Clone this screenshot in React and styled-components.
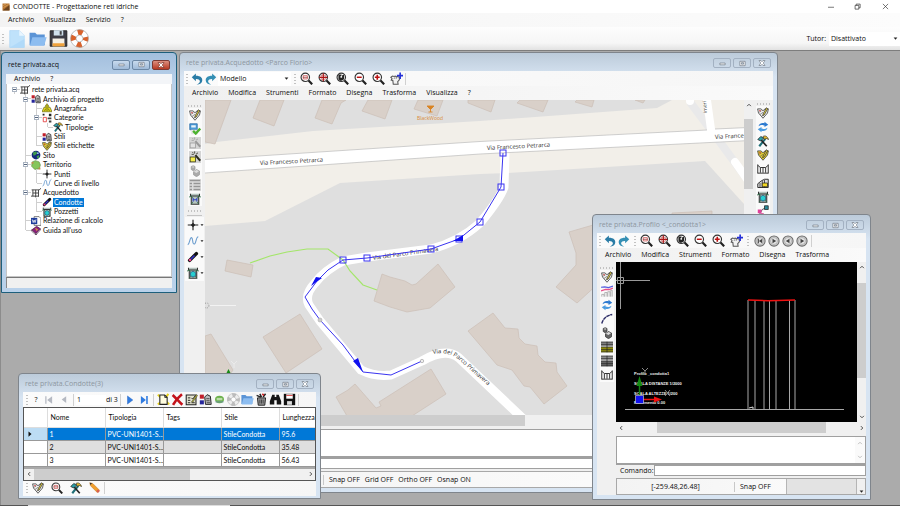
import React from 'react';
import styled, { createGlobalStyle, css } from 'styled-components';

const GlobalStyle = createGlobalStyle`
    * {
        box-sizing: border-box;
    }

    body {
        margin: 0;
        overflow: hidden;
        font-family: "Open Sans", "Noto Sans", sans-serif;
        font-size: 7px;
        line-height: 10px;
        color: #0c0c0c;
    }

    button, input, select, textarea {
        font: inherit;
        color: inherit;
        margin: 0;
        padding: 0;
        border: 0;
        background: none;
        outline: none;
    }
`;

/* ---------- icons ---------- */

const Svg = styled.svg`
    display: block;
    flex: none;
    width: ${(p) => p.$size}px;
    height: ${(p) => p.$size}px;
`;

const lens = (
    <>
        <circle cx="6.5" cy="6.5" r="5.2" fill="#fff" stroke="#333" strokeWidth="1.4" />
        <path d="M10.5 10.5L15 15.2" stroke="#222" strokeWidth="2.6" />
    </>
);

const heart = (fill) => (
    <>
        <path d="M.8 2.500h4.500L8 5l2.700-2.500h4.500L14 8l-6 7-6-7z" fill={fill} stroke="#444" strokeWidth="1.100" />
        <path d="M4 10l4-3M6 12.500l4-3M3 7l3-2" stroke="#666" strokeWidth=".9" />
        <path d="M8 9.500L12.500 1l1.800 1.200-4.300 7.800-2.200 1.500z" fill="#e8d548" stroke="#222" strokeWidth=".9" />
        <circle cx="4" cy="5" r="1.100" fill="#c33" />
    </>
);

const buoy = (ring, band) => (
    <>
        <circle cx="8" cy="8" r="5.200" fill="none" stroke={band} strokeWidth="4.600" />
        <circle cx="8" cy="8" r="5.200" fill="none" stroke={ring} strokeWidth="4.600" strokeDasharray="4.080 4.080" strokeDashoffset="2.040" />
        <circle cx="8" cy="8" r="7.500" fill="none" stroke="#999" strokeWidth=".5" />
        <circle cx="8" cy="8" r="2.900" fill="#fff" stroke="#999" strokeWidth=".5" />
    </>
);

const wand = (box, stick) => (
    <>
        <rect x="0" y="0" width="16" height="16" fill="#d4d4d4" />
        <rect x="1.500" y="8" width="7" height="6.500" fill={box} stroke={stick} />
        <path d="M8.500 5.500l6.500 7.500" stroke={stick} strokeWidth="2.600" />
        <path d="M7.500 .5v3M3.500 4.500h3M9.500 4L12 2.500M4.500 1.500L6 3" stroke={stick} strokeWidth="1" />
    </>
);

const manhole = (fill) => (
    <>
        <path d="M2 1v3h12V1M3 4v11h10V4z" fill="#b4c4bf" stroke="#333" strokeWidth="1.400" />
        <path d="M0 5.500l3-1.500M16 5.500l-3-1.500M3 15l2-3M13 15l-2-3M3 4l2 3M13 4l-2 3" stroke="#2d6d48" strokeWidth="1.100" />
        {fill && <path d="M8 5.500l3.500 2v4L8 13.500l-3.500-2v-4z" fill={fill} stroke="#136" strokeWidth=".8" />}
    </>
);

const sheet = (top, bottom) => (
    <>
        <path d="M0 1h16v6H0z" fill={top} />
        <path d="M0 8h16v7H0z" fill={bottom} />
        <path d="M0 1.500h16M0 4.500h16M0 8h16M0 11.500h16M0 14.500h16M8 1v14" stroke="#222" strokeWidth=".9" />
    </>
);

const cubes = (fill, ink, light) => (
    <>
        <path d="M3 2l2.500-1L8 2v4L5.500 7.500 3 6z" fill={fill} stroke={ink} />
        <path d="M6 9l4-3 4 2v5l-4 2.500L6 13z" fill={fill} stroke={ink} />
        <path d="M6.500 9l3.500 1.500L13.500 8 10 6.500zM3.500 2.500l2 1 2-1-2-1z" fill={light} />
    </>
);

const round = (mark) => (
    <>
        <circle cx="8" cy="8" r="6.800" fill="#d4d4d4" stroke="#6a6a6a" strokeWidth="1.400" />
        <circle cx="8" cy="8" r="4.600" fill="#e6e6e6" stroke="#999" strokeWidth=".8" />
        <path d={mark} fill="#444" />
    </>
);

const glyphs = {
    app: (
        <>
            <path d="M1 1h14v14H1z" fill="#b5722e" />
            <path d="M1 15L15 4v11z" fill="#6b4420" />
            <path d="M2 5l6-3M3 9l10-6" stroke="#e3b777" strokeWidth="1.200" />
        </>
    ),
    page: (
        <>
            <path d="M1.500 .5h8.500l4.500 4.500v10.500h-13z" fill="#bfe2fb" stroke="#a5d3f5" strokeWidth=".5" />
            <path d="M10 .5V5h4.500z" fill="#e9f6ff" />
            <path d="M1.500 15.500h13V8z" fill="#a9d6f8" opacity=".6" />
        </>
    ),
    folder: (
        <>
            <path d="M.5 2.500h5L7 4h7v9.500H.5z" fill="#5b94d6" />
            <path d="M3 6.500h12.700L13.500 14H.8z" fill="#8dbdf0" />
        </>
    ),
    disk: (
        <>
            <path d="M1 1.500h14v13H1z" fill="#3c3c44" stroke="#222" strokeWidth=".8" />
            <path d="M4 1h8v4.500H4z" fill="#cfe0ec" />
            <path d="M9 1.800h1.700v3H9z" fill="#444" />
            <path d="M3 8h10v6.500H3z" fill="#f6f1e6" />
            <path d="M3 12h10v2.600H3z" fill="#efa23c" />
        </>
    ),
    save: (
        <>
            <path d="M1 1h14v14H1z" fill="#111" />
            <path d="M4 1.500h8V7H4z" fill="#fff" />
            <path d="M5 10h6v4.500H5z" fill="#ddd" />
            <path d="M4 3h8" stroke="#c22" />
        </>
    ),
    buoy: buoy('#d9622b', '#fff'),
    buoyGrey: buoy('#bdbdbd', '#eee'),
    undo: <path d="M1 5.500L6.500 .5v3c6.500 0 9 3 8.500 6.700-.3 2.800-3 4.800-7.500 5.300 3.500-1.500 4.500-3 4.300-4.700-.3-2-2.300-2.900-5.300-2.800v3z" fill="#2a7ca6" />,
    redo: <path d="M15 5.500L9.500 .5v3C3 3.500 .5 6.500 1 10.200c.3 2.800 3 4.800 7.500 5.300-3.500-1.500-4.500-3-4.300-4.700.3-2 2.300-2.900 5.300-2.800v3z" fill="#348fb4" />,
    zoomWindow: <>{lens}<path d="M4 4.500h5v4H4z" fill="none" stroke="#c55" /><path d="M3.500 6.500h6" stroke="#944" /></>,
    zoomAll: <>{lens}<path d="M6.500 1.500v10M1.500 6.500h10" stroke="#a11" strokeWidth="1.500" /><path d="M4 4h5v5H4z" fill="none" stroke="#b33" strokeWidth=".7" /></>,
    zoomPrev: <>{lens}<path d="M3 3h4l-1 2 4-2v6L6 11 3 9z" fill="#222" /><path d="M5.500 5h2v2h-2z" fill="#fff" /></>,
    zoomOut: <>{lens}<path d="M3.500 6.500h6" stroke="#b11" strokeWidth="1.800" /></>,
    zoomIn: <>{lens}<path d="M3.500 6.500h6M6.500 3.500v6" stroke="#b11" strokeWidth="2" /></>,
    pan: (
        <>
            <path d="M4 15h6l-.5-3 2-2.500V6.500l-2-1-1.500.5-1.500-1-1.500.5L3 5 1 6.500 2.500 8l-1 2 2 .5z" fill="#f2f2f2" stroke="#555" strokeWidth="1.300" />
            <path d="M5 8.500l1-2M7.500 8.500l.5-2" stroke="#666" strokeWidth=".9" />
            <path d="M12.500 .5v8M8.500 4.500h7.500" stroke="#2430d8" strokeWidth="2" />
        </>
    ),
    heart: heart('#f1f1f1'),
    heartYellow: heart('#e5cf2e'),
    check: (
        <>
            <path d="M1 1h10v8H1z" fill="#4b9bd8" stroke="#2b6ba5" />
            <path d="M3 3h6v3H3z" fill="#e8f3fb" />
            <path d="M3 9h9v6H3z" fill="#e5e5e5" />
            <path d="M5.500 10.500l3.500 3.500 6-6.500" fill="none" stroke="#4cb22f" strokeWidth="3.200" />
        </>
    ),
    wandGrey: wand('#e2e2e2', '#999'),
    wand: wand('#f4ec4a', '#2a2a1a'),
    cubes: cubes('#666', '#333', '#ddd'),
    cubesGrey: cubes('#aaa', '#999', '#ddd'),
    listGrey: (
        <>
            <path d="M0 0h16v16H0z" fill="#dcdcdc" />
            <path d="M1 1h14v2H1zM1 5h3v2H1zM1 9h3v2H1zM1 13h3v2H1zM6 5h9v2H6zM6 9h9v2H6zM6 13h9v2H6z" fill="#969696" />
        </>
    ),
    well: <>{manhole()}<path d="M5.500 6.500v5M10.500 6.500v5M5.500 9h5" stroke="#2b3bc0" strokeWidth="1.300" /></>,
    manhole: manhole('#28cfcf'),
    point: <><path d="M8 1v14M1 8h14" stroke="#222" strokeWidth="1.500" /><path d="M8 5l3 3-3 3-3-3z" fill="#222" /></>,
    curve: <path d="M1 13C4 12 3.500 3 6 3.500s.5 8.500 3.500 8.500 1.500-8 5.500-10" fill="none" stroke="#6f9fcf" strokeWidth="1.500" />,
    pipe: (
        <>
            <path d="M3.500 12.500L12.500 3.500" stroke="#111" strokeWidth="4.600" strokeLinecap="round" />
            <path d="M5 11l5-5" stroke="#3333cc" strokeWidth="2.200" />
            <circle cx="4" cy="12" r="1.700" fill="#e48" />
        </>
    ),
    sync: (
        <>
            <path d="M2 7c1-4 5-5 8-4V1l5 4-5 3V6C7 5 5 5 2 7z" fill="#2c7ad0" />
            <path d="M14 9c-1 4-5 5-8 4v2l-5-4 5-3v2c3 1 5 1 8-1z" fill="#4a9be0" />
        </>
    ),
    tools: (
        <>
            <path d="M3 15L11 5" stroke="#1f6f78" strokeWidth="2.800" />
            <path d="M13 15L5 6" stroke="#222" strokeWidth="2.200" />
            <path d="M1 6l4-4 4 2-4 4z" fill="#2aa0a8" stroke="#222" />
            <path d="M8 2c3-2 6 0 7.500 4L12 4.500 10 6z" fill="#e0b52c" stroke="#222" strokeWidth=".8" />
        </>
    ),
    section: <path d="M1 2v12M15 2v12M1 3l3.500 3h7L15 3M1 13.500h14M4.500 6v7M8 6v7M11.500 6v7" fill="none" stroke="#333" strokeWidth="1.300" />,
    sectionYellow: (
        <>
            <path d="M1 14V9l5-4 4-2h5v11z" fill="#ddd" stroke="#222" strokeWidth="1.200" />
            <path d="M4 8v6M7 5v9M10 4v10" stroke="#222" />
            <path d="M7 8h7v5H7z" fill="#f2d824" stroke="#222" />
        </>
    ),
    nodes: (
        <>
            <path d="M3 13l4-7 6-3" stroke="#222" fill="none" />
            <path d="M1 6h5v5H1z" fill="#e0409a" />
            <path d="M10 1h5v5h-5z" fill="#2a8a9a" stroke="#222" />
            <path d="M5 11h4v4H5z" fill="#d03a8c" />
        </>
    ),
    chart: (
        <>
            <path d="M1 15.500v-3h3v3M5 15.500V10h3v5.500M9 15.500V9h3v6.500M13 15.500V7h2v8.500" fill="#f4f4f4" stroke="#999" strokeWidth=".9" />
            <path d="M0 3l5-.5 5 1 6-2" fill="none" stroke="#5560e0" strokeWidth="1.500" />
            <path d="M0 8l6-2 5 0 5-2" fill="none" stroke="#e8508a" strokeWidth="1.700" />
        </>
    ),
    arc: <path d="M1 14C3 7 8 3 15 2" fill="none" stroke="#2c2c66" strokeWidth="1.900" strokeDasharray="5 .6" />,
    sheetYellow: sheet('#888', '#8f8b10'),
    sheetGrey: sheet('#999', '#666'),
    roundFirst: round('M5 5h1.500v6H5zM11 5v6L6.500 8z'),
    roundNext: round('M6 5l5 3-5 3z'),
    roundPrev: round('M10 5v6L5 8z'),
    roundLast: round('M6 5l5 3-5 3z'),
    first: <path d="M2 2h2v12H2zM13 2v12L5 8z" fill="#b5b9c2" />,
    prev: <path d="M11 2v12L3 8z" fill="#b5b9c2" />,
    next: <path d="M4 1.500v13L12.500 8z" fill="#2f7be0" stroke="#1b5fc0" strokeWidth=".7" />,
    last: <path d="M3 1.500v13L11 8zM11.500 1.500h2.500v13h-2.500z" fill="#2f7be0" />,
    newRow: (
        <>
            <path d="M1 2l4 4M14 1l-3 4M1 14l4-3M15 14l-3-3" stroke="#e8d31e" strokeWidth="2.500" />
            <path d="M3.500 2.500h6l3 3v8.500h-9z" fill="#fffde0" stroke="#222" strokeWidth="1.300" />
            <path d="M9.500 2.500v3h3" fill="none" stroke="#222" />
        </>
    ),
    remove: <path d="M2 2.500C6 6 10 11 14 14.500M13.500 1.500C9 5 5 10 2.500 14.500" fill="none" stroke="#c3121a" strokeWidth="3.200" />,
    form: (
        <>
            <path d="M1.500 2.500h12v12h-12z" fill="#e6e6d2" stroke="#222" strokeWidth="1.300" />
            <path d="M3.500 6h3M3.500 9h3M3.500 12h3M8 6l1.500 1.500 3-4M8 12h4" fill="none" stroke="#222" strokeWidth="1.200" />
            <path d="M8 11l6-9 1.500 1-6 8.500z" fill="#b8b431" stroke="#333" strokeWidth=".6" />
        </>
    ),
    style: (
        <>
            <path d="M1 2h5v5H1z" fill="#c11f2a" />
            <path d="M1 9h5v5H1z" fill="#26269b" />
            <path d="M7 5l3-3 4 2 1 10H8z" fill="#bbb" stroke="#222" strokeWidth="1.200" />
            <path d="M9 7h4M9 9.500h4M9.500 12h4" stroke="#333" />
        </>
    ),
    world: (
        <>
            <path d="M2.500 8a5.500 4.500 0 0111 0 5.500 4.500 0 01-11 0z" fill="#6bb04b" />
            <path d="M4.500 6h7v3h-7z" fill="#bcdca9" />
            <path d="M3 11h10" stroke="#6d8bb0" />
        </>
    ),
    bin: (
        <>
            <path d="M3 6h10l-1 9H4z" fill="#999" stroke="#222" strokeWidth="1.200" />
            <path d="M2 3l5 2M6 1l2 4M13 1l-3 4" stroke="#222" strokeWidth="1.800" />
            <path d="M9 1l2 2" stroke="#c22" strokeWidth="2" />
            <path d="M6 8v5M8 8v5M10 8v5" stroke="#333" />
        </>
    ),
    binoculars: <path d="M4 2h3v3h2V2h3l3 8v4H9.500V9h-3v5H1v-4z" fill="#151515" />,
    pencil: (
        <>
            <path d="M1 1l4 1 9 9-3 3-9-9z" fill="#f2a02e" stroke="#b06a14" strokeWidth=".6" />
            <path d="M1 1l3 .8L2 4z" fill="#333" />
            <path d="M12 9.500l2.500 2.500-2.500 2.500-2.500-2.500z" fill="#d8604e" />
        </>
    ),
    network: <path d="M1 3h12l3-2.500M3 3v10M0 13h12M12 3v11M3 8h9M7.500 3v12" fill="none" stroke="#333" strokeWidth="1.400" />,
    trident: (
        <>
            <path d="M8 1l3 4-1 2h3l3 7H0l3-7h3L5 5z" fill="#e2d91c" stroke="#5d5a10" strokeWidth="1" />
            <path d="M8 3v10M4 13l2-4M12 13l-2-4" stroke="#45430e" />
        </>
    ),
    categories: (
        <>
            <path d="M1 1h3v3H1zM11 1h4v4h-4z" fill="#222" />
            <path d="M9 7h6v3H9zM11 12h4v3h-4z" fill="#444" />
            <path d="M2 7h5v7H2z" fill="#fff" stroke="#e03434" strokeWidth="1.300" />
        </>
    ),
    globe: (
        <>
            <circle cx="8" cy="8" r="7" fill="#14287c" />
            <path d="M3 4l5-2 2 3-3 3-3 1zM9 10l4-2v4l-3 2z" fill="#3d9a4c" />
            <circle cx="11" cy="5" r="1.400" fill="#9cc6ef" />
        </>
    ),
    land: (
        <>
            <path d="M2 3l5-2 6 2 2 5-2 6-7 1-5-5z" fill="#86c65c" stroke="#5d8a3f" />
            <path d="M1 3h3v3H1zM12 12h3v3h-3z" fill="#c08a4c" />
        </>
    ),
    word: (
        <>
            <path d="M5 1h8l3 3v11H5z" fill="#fff" stroke="#333" />
            <path d="M0 3h10v10H0z" fill="#1f3d9c" />
            <path d="M2 5.500l1.500 5L5 6.500l1.500 4 1.500-5" fill="none" stroke="#fff" strokeWidth="1.200" />
        </>
    ),
    book: (
        <>
            <path d="M1 8l8-6 6 4-7 8z" fill="#8d1f7c" stroke="#3b0d35" />
            <path d="M1 8l7 6v2L1 10zM8 14l7-8v2l-7 8z" fill="#eee" stroke="#3b0d35" strokeWidth=".8" />
            <path d="M7 6l3 1-1 2" fill="none" stroke="#f4d21c" strokeWidth="1.500" />
        </>
    ),
    minimize: <path d="M2 7h12v4H2z" fill="#fff" stroke="currentColor" strokeWidth="1.500" />,
    maximize: <path d="M2 3h12v10H2zM5.500 6h5v3.500h-5z" fill="#fff" fillRule="evenodd" stroke="currentColor" strokeWidth="1.500" />,
    close: <path d="M2 3h4l2 2.500L10 3h4l-3.500 5 3.500 5h-4l-2-2.500L6 13H2l3.500-5z" fill="#fff" stroke="currentColor" strokeWidth="1.200" />,
    sysMin: <path d="M2 8.500h12" stroke="#333" strokeWidth="1.300" />,
    sysMax: <path d="M2.500 5.500h8.500V14H2.500zM5 5.500V2.500h9V11h-3" fill="none" stroke="#333" strokeWidth="1.600" />,
    sysClose: <path d="M2 2l12 12M14 2L2 14" stroke="#333" strokeWidth="1.500" />,
    up: <path d="M3 11l5-5 5 5" fill="none" stroke="currentColor" strokeWidth="2.500" />,
    down: <path d="M3 5l5 5 5-5" fill="none" stroke="currentColor" strokeWidth="2.500" />,
    left: <path d="M11 3L6 8l5 5" fill="none" stroke="currentColor" strokeWidth="2.500" />,
    right: <path d="M5 3l5 5-5 5" fill="none" stroke="currentColor" strokeWidth="2.500" />,
    caret: <path d="M2 5h12l-6 7z" fill="#222" />,
    current: <path d="M4 1v14l8-7z" fill="#111" />
};

const Icon = ({ name, size = 12 }) => (
    <Svg viewBox="0 0 16 16" $size={size} aria-hidden="true">{glyphs[name]}</Svg>
);

/* ---------- shared parts ---------- */

const IconButton = styled.button`
    display: flex;
    align-items: center;
    justify-content: center;
    flex: none;
    width: ${(p) => p.$w || 14}px;
    height: ${(p) => p.$h || 14}px;
`;

const Grip = styled.span`
    flex: none;
    width: 2px;
    height: 10px;
    margin: 0 ${(p) => p.$gap || 2}px;
    background: repeating-linear-gradient(#c2c2c2 0 1px, transparent 1px 3px);
`;

const GripRow = styled.span`
    flex: none;
    width: 13px;
    height: 2px;
    margin: ${(p) => p.$top || 0}px 0 1px;
    background: repeating-linear-gradient(90deg, #c2c2c2 0 1px, transparent 1px 3px);
`;

const Divider = styled.span`
    flex: none;
    width: 1px;
    height: 12px;
    margin: 0 2px;
    background: #d0d0d0;
`;

const MenuBar = styled.nav`
    display: flex;
    align-items: center;
    flex: none;
    gap: 10px;
    height: ${(p) => p.$h || 14}px;
    padding-left: 8px;
    background: ${(p) => p.$bg || 'linear-gradient(90deg, #f0f0f0, #fafafa)'};
`;

const Menu = ({ items, ...rest }) => (
    <MenuBar {...rest}>
        {items.map((item) => <button type="button" key={item}>{item}</button>)}
    </MenuBar>
);

const SelectBox = styled.span`
    display: flex;
    align-items: center;
    flex: none;
    width: ${(p) => p.$w}px;
    height: 14px;
    background: #fff;

    select {
        flex: 1;
        min-width: 0;
        appearance: none;
        padding-left: 2px;
    }

    svg {
        margin-right: 2px;
        pointer-events: none;
    }
`;

const Select = ({ id, label, value, width }) => (
    <SelectBox $w={width}>
        <select id={id} aria-label={label} defaultValue={value}>
            <option>{value}</option>
        </select>
        <Icon name="caret" size={5} />
    </SelectBox>
);

const Frame = styled.section`
    position: absolute;
    left: ${(p) => p.$x}px;
    top: ${(p) => p.$y}px;
    width: ${(p) => p.$w}px;
    height: ${(p) => p.$h}px;
    display: flex;
    flex-direction: column;
    padding: 0 4px 4px;
    border: 1px solid ${(p) => (p.$active ? '#1d5f7c' : '#7f858c')};
    border-radius: 4px 4px 0 0;
    background: ${(p) => (p.$active
        ? 'linear-gradient(#a3bfdd, #b9d1ea 30px)'
        : 'linear-gradient(#bccbda, #d7e4f2 24px)')};
`;

const TitleBar = styled.header`
    display: flex;
    align-items: center;
    flex: none;
    height: ${(p) => p.$h}px;
    padding: 2px 0 0 2px;
    color: ${(p) => (p.$active ? '#111' : '#8d969f')};

    h2 {
        flex: 1;
        margin: 0;
        font: inherit;
    }
`;

const WinButton = styled.button`
    display: flex;
    align-items: center;
    justify-content: center;
    width: 18px;
    height: 10px;
    margin-right: 2px;
    border: 1px solid ${(p) => (p.$active ? '#6c88a6' : '#a3b1c2')};
    border-radius: 2px;
    color: #66707c;
    background: ${(p) => (p.$active ? 'linear-gradient(#c9dbee, #9fbad8)' : 'transparent')};

    ${(p) => p.$danger && css`
        border-color: #7c3a34;
        background: linear-gradient(#dc8f80, #b93a24);
        color: #6c241a;
    `}
`;

const Body = styled.div`
    display: flex;
    flex: 1;
    flex-direction: column;
    min-height: 0;
    background: #f0f0f0;
`;

const Window = ({ title, x, y, w, h, head = 18, active, children }) => (
    <Frame $x={x} $y={y} $w={w} $h={h} $active={active} aria-label={title}>
        <TitleBar $h={head} $active={active}>
            <h2>{title}</h2>
            <WinButton type="button" $active={active} aria-label="Riduci"><Icon name="minimize" size={7} /></WinButton>
            <WinButton type="button" $active={active} aria-label="Ingrandisci"><Icon name="maximize" size={7} /></WinButton>
            <WinButton type="button" $active={active} $danger={active} aria-label="Chiudi"><Icon name="close" size={8} /></WinButton>
        </TitleBar>
        <Body>{children}</Body>
    </Frame>
);

const ToolBar = styled.div`
    display: flex;
    align-items: center;
    flex: none;
    height: 15px;
    background: linear-gradient(90deg, #fbfbfb, #f6f6f6);
`;

const ToolGroup = styled.div`
    display: flex;
    align-items: center;
    gap: ${(p) => p.$gap || 0}px;
`;

const Rail = styled.div`
    display: flex;
    flex-direction: column;
    align-items: center;
    flex: none;
    width: ${(p) => p.$w}px;
    padding-top: ${(p) => p.$top || 5}px;
`;

const RailButton = styled(IconButton)`
    background: #fafafa;
`;

const RailMenu = styled.button`
    display: flex;
    align-items: center;
    gap: 1px;
    height: 16px;
    padding-left: 2px;
    background: #fafafa;
`;

const RailRule = styled.span`
    width: 15px;
    height: 1px;
    margin: 2px 0 1px;
    background: #c4c4c4;
`;

const Work = styled.div`
    display: flex;
    flex: 1;
    min-height: 0;
`;

const Main = styled.div`
    display: flex;
    flex: 1;
    flex-direction: column;
    min-width: 0;
`;

const View = styled.div`
    display: flex;
    flex: 1;
    min-height: 0;
`;

const Drawing = styled.svg`
    display: block;
    flex: 1;
    min-width: 0;
    height: 100%;
    background: ${(p) => p.$bg};
`;

const Scroll = styled.div`
    display: flex;
    flex: none;
    align-items: center;
    flex-direction: ${(p) => (p.$vertical ? 'column' : 'row')};
    width: ${(p) => (p.$vertical ? '9px' : 'auto')};
    height: ${(p) => (p.$vertical ? 'auto' : '11px')};
    background: #f0f0f0;
    color: #444;
`;

const Gap = styled.span`
    flex: ${(p) => p.$grow} 1 0;
`;

const Thumb = styled.span`
    flex: ${(p) => p.$grow} 1 0;
    align-self: stretch;
    background: #cdcdcd;
`;

const ScrollBar = ({ vertical, before, size, after }) => (
    <Scroll $vertical={vertical}>
        <IconButton type="button" $w={9} $h={10} aria-label="Indietro"><Icon name={vertical ? 'up' : 'left'} size={6} /></IconButton>
        <Gap $grow={before} />
        <Thumb $grow={size} />
        <Gap $grow={after} />
        <IconButton type="button" $w={9} $h={10} aria-label="Avanti"><Icon name={vertical ? 'down' : 'right'} size={6} /></IconButton>
    </Scroll>
);

const Output = styled.div`
    display: flex;
    flex: none;
    height: 29px;
    margin-top: 3px;
    border: 1px solid #a0a0a0;
    border-bottom-width: 2px;
    background: #fff;
    color: #bbb;

    textarea {
        flex: 1;
        resize: none;
    }
`;

const OutputArrows = styled.div`
    display: flex;
    flex-direction: column;
    justify-content: space-between;
    padding: 3px 2px;
    background: #fafafa;
`;

const Command = styled.div`
    display: flex;
    align-items: center;
    flex: none;
    height: 11px;

    label {
        width: 38px;
        padding-left: 4px;
    }

    input {
        flex: 1;
        min-width: 0;
        height: 11px;
        border: 1px solid #a0a0a0;
        background: #fff;
    }
`;

const StatusBar = styled.footer`
    display: flex;
    align-items: center;
    flex: none;
    gap: 5px;
    height: 17px;
    margin-top: 2px;
    border: 1px solid #a8a8a8;
    background: linear-gradient(90deg, #f3f3f3, #fdfdfd);
`;

const Coords = styled.span`
    width: 118px;
    border-right: 1px solid #c8c8c8;
    text-align: center;
    height: 10px;
`;

const StatusFill = styled.span`
    display: flex;
    flex: 1;
    align-self: stretch;
    align-items: flex-end;
    justify-content: flex-end;
    margin-left: 10px;
    border-left: 1px solid #b5b5b5;
    background: #e3e3e3;
`;

const SizeGrip = styled.span`
    width: 9px;
    height: 100%;
    display: flex;
    align-items: flex-end;
    justify-content: center;
    border-left: 1px solid #b5b5b5;
    background: #f0f0f0;
`;

const navTools = [
    ['zoomWindow', 'Zoom finestra'],
    ['zoomAll', 'Zoom estensioni'],
    ['zoomPrev', 'Zoom precedente'],
    ['zoomOut', 'Riduci zoom'],
    ['zoomIn', 'Aumenta zoom'],
    ['pan', 'Sposta vista']
];

const NavTools = () => (
    <ToolGroup $gap={4}>
        {navTools.map(([name, label]) => (
            <IconButton type="button" key={name} aria-label={label}><Icon name={name} size={13} /></IconButton>
        ))}
    </ToolGroup>
);

const UndoTools = () => (
    <ToolGroup>
        <IconButton type="button" aria-label="Annulla"><Icon name="undo" size={12} /></IconButton>
        <IconButton type="button" aria-label="Ripeti"><Icon name="redo" size={12} /></IconButton>
    </ToolGroup>
);

const RailTools = ({ names }) => names.map((name) => (
    <RailButton type="button" key={name} aria-label={name}><Icon name={name} /></RailButton>
));

/* ---------- project tree ---------- */

const Tree = styled.ul`
    display: grid;
    grid-auto-rows: minmax(0, 1fr);
    flex: none;
    height: 150px;
    margin: 1px 0 0;
    padding: 0 0 0 2px;
    list-style: none;
    font-family: Lato, "Liberation Sans", sans-serif;
`;

const TreePane = styled.div`
    flex: 1;
    border: 1px solid #c5c5c5;
    border-top: 0;
    background: #fff;
`;

const Node = styled.li`
    display: flex;
    align-items: stretch;

    svg, button {
        align-self: center;
    }
`;

const Guide = styled.span`
    position: relative;
    flex: none;
    width: 11px;
    display: flex;
    align-items: center;
    justify-content: center;

    &::before {
        content: "";
        display: ${(p) => (p.$kind === ' ' ? 'none' : 'block')};
        position: absolute;
        left: 5px;
        top: ${(p) => (p.$kind === 'r' ? '50%' : 0)};
        bottom: ${(p) => (p.$kind === 'L' ? '50%' : 0)};
        border-left: 1px solid #cfcfcf;
    }

    &::after {
        content: "";
        display: ${(p) => ('TLr'.includes(p.$kind) ? 'block' : 'none')};
        position: absolute;
        left: 6px;
        right: 0;
        top: 4px;
        border-top: 1px solid #cfcfcf;
    }
`;

const Expander = styled.button`
    position: relative;
    z-index: 1;
    width: 5px;
    height: 5px;
    border: 1px solid #a9b3c1;
    background: linear-gradient(#fff 1px, #56667f 1px 2px, #fff 2px);
`;

const NodeLabel = styled.button`
    align-self: center;
    height: 9px;
    line-height: 9px;
    padding: 0 1px;
    margin-left: 1px;
    background: ${(p) => (p.$selected ? '#0078d7' : 'none')};
    color: ${(p) => (p.$selected ? '#fff' : '#0c0c0c')};
`;

// guides: one char per level, r = root, T = child, L = last child, I = line only
const nodes = [
    { guides: 'r', open: true, icon: 'network', label: 'rete privata.acq' },
    { guides: ' T', open: true, icon: 'style', label: 'Archivio di progetto' },
    { guides: ' IT', icon: 'trident', label: 'Anagrafica' },
    { guides: ' IT', open: true, icon: 'categories', label: 'Categorie' },
    { guides: ' IIL', icon: 'tools', label: 'Tipologie' },
    { guides: ' IT', icon: 'style', label: 'Stili' },
    { guides: ' IL', icon: 'heartYellow', label: 'Stili etichette' },
    { guides: ' T', icon: 'globe', label: 'Sito' },
    { guides: ' T', open: true, icon: 'land', label: 'Territorio' },
    { guides: ' IT', icon: 'point', label: 'Punti' },
    { guides: ' IL', icon: 'curve', label: 'Curve di livello' },
    { guides: ' T', open: true, icon: 'network', label: 'Acquedotto' },
    { guides: ' IT', icon: 'pipe', label: 'Condotte', selected: true },
    { guides: ' IL', icon: 'manhole', label: 'Pozzetti' },
    { guides: ' T', icon: 'word', label: 'Relazione di calcolo' },
    { guides: ' L', icon: 'book', label: "Guida all'uso" }
];

const TreeStatus = styled.div`
    flex: none;
    height: 11px;
    border-top: 1px solid #777;
    border-left: 1px solid #888;
`;

const ProjectWindow = () => (
    <Window title="rete privata.acq" x={1} y={1} w={176} h={241} head={21} active>
        <Menu items={['Archivio', '?']} $h={10} $bg="#f3f5f8" />
        <TreePane>
            <Tree>
                {nodes.map((node) => (
                    <Node key={node.label}>
                        {[...node.guides].map((kind, i) => (
                            <Guide key={i} $kind={kind}>
                                {node.open && i === node.guides.length - 1 && <Expander type="button" aria-label="Comprimi" />}
                            </Guide>
                        ))}
                        <Icon name={node.icon} size={10} />
                        <NodeLabel type="button" $selected={node.selected}>{node.label}</NodeLabel>
                    </Node>
                ))}
            </Tree>
        </TreePane>
        <TreeStatus />
    </Window>
);

/* ---------- map window ---------- */

const buildings = [
    '205,100 231,100 215,144 205,142',
    '260,100 284,100 274,126 253,118',
    '322,100 346,100 341,103 332,124 315,118',
    '368,100 392,100 385,119 362,111',
    '418,100 443,100 437,116 414,109',
    '468,100 495,100 491,112 468,103',
    '520,100 548,100 543,112 517,103',
    '577,100 594,100 592,107 575,102',
    '635,100 645,100 643,103',
    '227,260 253,265 251,277 225,271',
    '300,314 322,349 286,373 263,337',
    '205,336 211,334 233,370 225,382 205,390',
    '382,274 390,277 405,281 412,285 416,284 438,264 455,287 430,308 407,312 390,307 374,301',
    '493,313 505,328 518,329 519,338 525,344 537,346 538,355 545,362 556,363 557,372 567,386 544,404 530,387 524,386 512,370 497,365 468,331',
    '600,223 569,232 576,253 576,265 556,287 577,303 600,282',
    '336,397 348,390 355,384 376,408 381,406 379,402 431,369 446,394 412,416 347,416',
    '672,213 712,211 712,230 672,230'
];

const vertices = [[503, 153], [501, 187], [480, 222], [459, 239], [431, 249], [367, 258], [343, 260]];

const MapDrawing = () => (
    <Drawing $bg="#dfdfdf" viewBox="205 100 539 315" preserveAspectRatio="xMinYMin slice" role="img" aria-label="Mappa">
        <path d="M205 144L216 142 313 131 480 121 657 108 672 100H760V216L744 204 705 161 508 173 480 174 340 183 265 221 205 226z" fill="#f2efe9" />
        <path d="M690 102L714 134 744 175" fill="none" stroke="#e9e9ea" strokeWidth="8" />
        <path d="M735 162l17 24" stroke="#fff" strokeWidth="8" strokeLinecap="round" />
        <circle cx="690" cy="101" r="4" fill="#fff" />
        {buildings.map((points) => <polygon key={points} points={points} fill="#d9d0c9" stroke="#cbbfb6" strokeWidth=".7" />)}
        <path d="M505 153L504 187Q500 199 480 223 459 242 431 249L367 257 343 261Q325 270 315 283 304 295 309 305L320 321 361 370Q375 377 391 375L422 361Q446 347 459 358L535 430" fill="none" stroke="#fff" strokeWidth="9" strokeLinejoin="round" />
        <path d="M205 159.500L480 141.500 707 130 703 100h8l4 29 45-2v13l-280 14-275 19z" fill="#fff" />
        <path d="M205 159.500L480 141.500 707 130M715 129l45-2M205 173l275-19 280-14" fill="none" stroke="#bbb" strokeWidth=".7" />
        <g fill="#333" fontSize="6" fontFamily="Open Sans, Noto Sans, sans-serif">
            <text transform="translate(260 165) rotate(-3)">Via Francesco Petrarca</text>
            <text transform="translate(487 150) rotate(-3)">Via Francesco Petrarca</text>
            <text transform="translate(715 139) rotate(-3)">Via France</text>
            <text transform="translate(707 113) rotate(-94)" fontSize="5">imeri</text>
            <text transform="translate(373 260) rotate(-8)">Via del Parco Primavera</text>
            <path id="streetCurve" d="M433 354Q448 351 458 359L510 405" fill="none" />
            <text><textPath href="#streetCurve">Via del Parco Primavera</textPath></text>
        </g>
        <path d="M427 106h7l-3 3h-1zM430.500 108v4M428.500 112h4" fill="#d98324" stroke="#d98324" strokeWidth=".9" />
        <text x="417" y="120" fill="#d98a35" fontSize="5" fontFamily="Open Sans, sans-serif">BlackWood</text>
        <path d="M250 263L270 256 287 252 307 249H328L343 260 350 271 363 285 377 290" fill="none" stroke="#a4e66a" strokeWidth="1.200" />
        <path d="M503 153L501 187 480 222 459 239 431 249 367 258 343 260 328 270 317 281 305 297 312 309 320 320 343 345 363 372 391 375 422 361" fill="none" stroke="#3a34f0" strokeWidth="1" />
        {vertices.map(([x, y]) => <rect key={x} x={x - 3} y={y - 3} width="6" height="6" fill="none" stroke="#3a34f0" strokeWidth="1" />)}
        <path d="M311 286l5-9 6 1zM353 361l5-3 5 14zM453 241l10-6 0 6z" fill="#1111f0" />
        <circle cx="320" cy="320" r="2" fill="#ccc" stroke="#aaa" strokeWidth=".6" />
        <circle cx="422" cy="361" r="1.700" fill="#eee" stroke="#999" strokeWidth=".6" />
        <path d="M209 305.500h27" fill="none" stroke="#f7f7f7" strokeWidth=".8" />
        <circle cx="206.500" cy="305.500" r="2.500" fill="none" stroke="#777" strokeWidth=".8" strokeDasharray="1 1.500" />
        <path d="M231 361l3 3 3-3M234 364v4" fill="none" stroke="#efefef" strokeWidth=".7" />
        <path d="M226 374l2.500-5 2.500 5z" fill="#158a15" />
    </Drawing>
);

const MapWindow = () => (
    <Window title="rete privata.Acquedotto <Parco Florio>" x={179} y={1} w={599} h={441}>
        <ToolBar>
            <Grip />
            <UndoTools />
            <Select label="Vista" value="Modello" width={73} />
            <Grip $gap={3} />
            <NavTools />
            <Divider />
        </ToolBar>
        <Menu items={['Archivio', 'Modifica', 'Strumenti', 'Formato', 'Disegna', 'Trasforma', 'Visualizza', '?']} />
        <Work>
            <Rail $w={21}>
                <GripRow />
                <RailTools names={['heart', 'check', 'wandGrey', 'wand', 'cubesGrey', 'listGrey', 'well']} />
                <GripRow $top={4} />
                <RailRule />
                {['point', 'curve', 'pipe', 'manhole'].map((name) => (
                    <RailMenu type="button" key={name} aria-label={name}>
                        <Icon name={name} size={12} />
                        <Icon name="caret" size={4} />
                    </RailMenu>
                ))}
            </Rail>
            <Main>
                <View>
                    <MapDrawing />
                    <ScrollBar vertical before={9} size={68} after={210} />
                </View>
                <ScrollBar before={60} size={250} after={219} />
                <Output>
                    <textarea readOnly aria-label="Messaggi" />
                    <OutputArrows><Icon name="up" size={6} /><Icon name="down" size={6} /></OutputArrows>
                </Output>
                <Command>
                    <input type="text" aria-label="Comando" />
                </Command>
                <StatusBar>
                    <Coords />
                    <span>Snap OFF</span>
                    <span>Grid OFF</span>
                    <span>Ortho OFF</span>
                    <span>Osnap ON</span>
                </StatusBar>
            </Main>
            <Rail $w={20} $top={3}>
                <GripRow />
                <RailTools names={['heart', 'sync', 'tools', 'heartYellow', 'section', 'sectionYellow', 'manhole', 'nodes']} />
            </Rail>
        </Work>
    </Window>
);

/* ---------- profile window ---------- */

const ProfileDrawing = () => (
    <Drawing $bg="#000" viewBox="616 262 241 161" preserveAspectRatio="xMinYMin slice" role="img" aria-label="Profilo">
        <g fill="none" stroke="#a8a8a8" strokeWidth="1">
            <path d="M748 300v110M755 300v110M764 300v110M769.500 300v110M776 300v110M789.500 300v110M795 300v110" />
            <path d="M625 409.500h219" />
            <path d="M616 280.500h34M620.500 262v47M617.500 277.500h6v6h-6z" stroke="#999" />
        </g>
        <path d="M748 300l20 .7 27-.7" fill="none" stroke="#e11" strokeWidth="1.600" />
        <path d="M749 408l4-1v2" fill="none" stroke="#ddd" />
        <g fill="#eee" fontSize="4" fontWeight="700" fontFamily="Liberation Sans, Arial, sans-serif">
            <text x="634" y="375">Profilo _condotta1</text>
            <text x="634" y="385">SCALA DISTANZE 1/2000</text>
            <text x="634" y="395">SCALA ALTEZZE 1/200</text>
            <text x="634" y="404">Riferimento 0.00</text>
        </g>
        <path d="M642 368l3 3 3-3M645 371v4M665 390l5 6M670 390l-5 6" stroke="#aaa" strokeWidth=".8" fill="none" />
        <path d="M639.500 395v-12" stroke="#148014" strokeWidth="1.500" />
        <path d="M636.500 386l3-10 3 10z" fill="#128a12" />
        <path d="M643 399.500h12" stroke="#e11" strokeWidth="1.500" />
        <path d="M654 396.500l8 3-8 3z" fill="#f01010" />
        <path d="M635.500 395.500h8v8h-8z" fill="#1111ee" stroke="#ddd" strokeWidth=".6" />
    </Drawing>
);

const ProfileWindow = () => (
    <Window title="rete privata.Profilo <_condotta1>" x={592} y={163} w={279} h={286}>
        <ToolBar>
            <Grip />
            <UndoTools />
            <Grip $gap={3} />
            <NavTools />
            <Grip $gap={4} />
            <ToolGroup>
                {['roundFirst', 'roundNext', 'roundPrev', 'roundLast'].map((name) => (
                    <IconButton type="button" key={name} aria-label={name}><Icon name={name} /></IconButton>
                ))}
            </ToolGroup>
            <Divider />
        </ToolBar>
        <Menu items={['Archivio', 'Modifica', 'Strumenti', 'Formato', 'Disegna', 'Trasforma']} />
        <Work>
            <Rail $w={19}>
                <GripRow />
                <RailTools names={['heart', 'chart', 'sync', 'arc', 'cubes', 'sheetYellow', 'sheetGrey', 'section']} />
            </Rail>
            <Main>
                <View>
                    <ProfileDrawing />
                    <ScrollBar vertical before={11} size={96} after={34} />
                </View>
                <ScrollBar before={32} size={168} after={31} />
                <Output>
                    <textarea readOnly aria-label="Messaggi profilo" />
                    <OutputArrows><Icon name="up" size={6} /><Icon name="down" size={6} /></OutputArrows>
                </Output>
                <Command>
                    <label htmlFor="profile-command">Comando:</label>
                    <input id="profile-command" type="text" />
                </Command>
                <StatusBar>
                    <Coords>[-259.48,26.48]</Coords>
                    <span>Snap OFF</span>
                    <StatusFill><SizeGrip><Icon name="caret" size={5} /></SizeGrip></StatusFill>
                </StatusBar>
            </Main>
        </Work>
    </Window>
);

/* ---------- pipes table ---------- */

const TableBox = styled.div`
    flex: none;
    display: flex;
    flex-direction: column;
    border: 1px solid #555;
    background: #a9a9a9;
    overflow: hidden;
`;

const Table = styled.table`
    width: 100%;
    margin-bottom: 2px;
    border-collapse: collapse;
    table-layout: fixed;
    font-family: Lato, "Liberation Sans", sans-serif;
    text-align: left;

    th, td {
        padding: 0 0 0 2px;
        border-right: 1px solid #999;
        border-bottom: 1px solid #999;
        font-weight: 400;
        white-space: nowrap;
        overflow: hidden;
    }

    th {
        height: 19px;
        padding-left: 3px;
        border-color: #ddd;
        background: #fff;
    }

    th:last-child, td:last-child {
        border-right: 0;
    }

    td {
        height: 13px;
    }
`;

const Row = styled.tr`
    background: ${(p) => (p.$selected ? '#0078d7' : p.$alt ? '#dfdfdf' : '#fff')};
    color: ${(p) => (p.$selected ? '#fff' : '#0c0c0c')};

    td:first-child {
        padding-left: 3px;
        background: ${(p) => (p.$selected ? '#bcdcf4' : '#fff')};
    }
`;

const RecordInput = styled.input`
    && {
        width: 30px;
        height: 10px;
        padding-left: 1px;
        background: #fff;
    }
`;

const Total = styled.span`
    width: 12px;
    white-space: nowrap;
`;

const pipes = [
    { nome: '1', tipologia: 'PVC-UNI1401-S...', stile: 'StileCondotta', lunghezza: '95.6' },
    { nome: '2', tipologia: 'PVC-UNI1401-S...', stile: 'StileCondotta', lunghezza: '35.48' },
    { nome: '3', tipologia: 'PVC-UNI1401-S...', stile: 'StileCondotta', lunghezza: '56.43' }
];

const recordTools = ['newRow', 'remove', 'form', 'style', 'world', 'buoyGrey', 'folder', 'bin', 'binoculars', 'save'];

const PipesWindow = () => (
    <Window title="rete privata.Condotte(3)" x={18} y={322} w={303} h={126}>
        <ToolBar>
            <Grip $gap={3} />
            <IconButton type="button" $w={10}>?</IconButton>
            <IconButton type="button" $w={16} aria-label="Primo"><Icon name="first" size={10} /></IconButton>
            <IconButton type="button" aria-label="Precedente"><Icon name="prev" size={9} /></IconButton>
            <Divider />
            <RecordInput aria-label="Posizione" defaultValue="1" />
            <Total>di 3</Total>
            <Divider />
            <IconButton type="button" aria-label="Successivo"><Icon name="next" size={10} /></IconButton>
            <IconButton type="button" aria-label="Ultimo"><Icon name="last" size={10} /></IconButton>
            <Divider />
            <ToolGroup>
                {recordTools.map((name) => (
                    <IconButton type="button" key={name} aria-label={name}><Icon name={name} size={13} /></IconButton>
                ))}
            </ToolGroup>
            <Divider />
        </ToolBar>
        <TableBox>
            <Table>
                <colgroup>
                    <col width="23" />
                    <col width="58" />
                    <col width="58" />
                    <col width="58" />
                    <col width="58" />
                    <col />
                </colgroup>
                <thead>
                    <tr>
                        <th aria-label="Riga" />
                        <th>Nome</th>
                        <th>Tipologia</th>
                        <th>Tags</th>
                        <th>Stile</th>
                        <th>Lunghezza</th>
                    </tr>
                </thead>
                <tbody>
                    {pipes.map((pipe, i) => (
                        <Row key={pipe.nome} $selected={i === 0} $alt={i === 1}>
                            <td>{i === 0 && <Icon name="current" size={6} />}</td>
                            <td>{pipe.nome}</td>
                            <td>{pipe.tipologia}</td>
                            <td />
                            <td>{pipe.stile}</td>
                            <td>{pipe.lunghezza}</td>
                        </Row>
                    ))}
                </tbody>
            </Table>
            <ScrollBar before={1} size={156} after={116} />
        </TableBox>
        <ToolBar>
            <Grip $gap={3} />
            <ToolGroup $gap={5}>
                {['heart', 'zoomWindow', 'tools', 'pencil'].map((name) => (
                    <IconButton type="button" key={name} aria-label={name}><Icon name={name} /></IconButton>
                ))}
            </ToolGroup>
            <Divider />
        </ToolBar>
    </Window>
);

/* ---------- application shell ---------- */

const Shell = styled.div`
    display: flex;
    flex-direction: column;
    height: 100vh;
    background: #fff;
`;

const AppTitle = styled.header`
    display: flex;
    align-items: center;
    flex: none;
    height: 13px;
    padding-left: 2px;
    background: #fff;

    h1 {
        flex: 1;
        margin: 0 0 0 3px;
        font: inherit;
    }
`;

const AppTools = styled.div`
    display: flex;
    align-items: center;
    flex: none;
    height: 24px;
    border-bottom: 1px solid #7d7d7d;
    background: linear-gradient(#fdfdfd, #f6f6f6 70%, #e2e2e2);

    label {
        margin-left: auto;
        padding-right: 3px;
    }
`;

const Desktop = styled.main`
    position: relative;
    flex: 1;
    min-height: 0;
    overflow: hidden;
    border-left: 1px solid #8c8c8c;
    background: #ababab;

    ${Frame} {
        margin-left: -1px;
    }
`;

const Taskbar = styled.div`
    flex: none;
    height: 1px;
    background: linear-gradient(90deg, #555 28px, #ddd 28px 230px, #555 230px);
`;

const App = () => (
    <>
        <GlobalStyle />
        <Shell>
            <AppTitle>
                <Icon name="app" size={8} />
                <h1>CONDOTTE - Progettazione reti idriche</h1>
                <IconButton type="button" $w={27} $h={13} aria-label="Riduci a icona"><Icon name="sysMin" size={8} /></IconButton>
                <IconButton type="button" $w={27} $h={13} aria-label="Ripristina"><Icon name="sysMax" size={7} /></IconButton>
                <IconButton type="button" $w={29} $h={13} aria-label="Chiudi"><Icon name="sysClose" size={7} /></IconButton>
            </AppTitle>
            <Menu items={['Archivio', 'Visualizza', 'Servizio', '?']} $bg="linear-gradient(90deg, #f3f3f3, #fcfcfc)" />
            <AppTools>
                <Grip />
                <ToolGroup>
                    <IconButton type="button" $w={21} $h={20} aria-label="Nuovo"><Icon name="page" size={18} /></IconButton>
                    <IconButton type="button" $w={21} $h={20} aria-label="Apri"><Icon name="folder" size={18} /></IconButton>
                    <IconButton type="button" $w={21} $h={20} aria-label="Salva"><Icon name="disk" size={19} /></IconButton>
                    <IconButton type="button" $w={21} $h={20} aria-label="Guida"><Icon name="buoy" size={19} /></IconButton>
                </ToolGroup>
                <label htmlFor="tutor">Tutor:</label>
                <Select id="tutor" value="Disattivato" width={71} />
            </AppTools>
            <Desktop>
                <ProjectWindow />
                <MapWindow />
                <ProfileWindow />
                <PipesWindow />
            </Desktop>
            <Taskbar />
        </Shell>
    </>
);

export default App;
